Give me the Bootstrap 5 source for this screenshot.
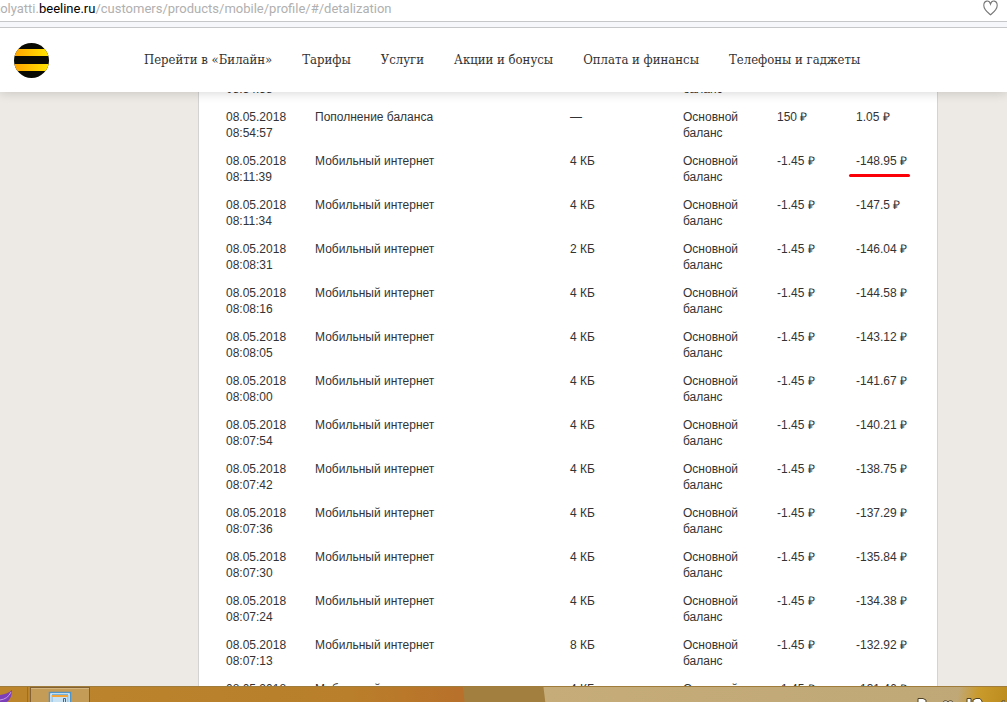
<!DOCTYPE html>
<html lang="ru">
<head>
<meta charset="utf-8">
<meta name="viewport" content="width=device-width, initial-scale=1">
<title>Детализация — Билайн</title>
<link href="https://cdn.jsdelivr.net/npm/bootstrap@5.3.0/dist/css/bootstrap.min.css" rel="stylesheet">
<style>
body{font-family:"Liberation Sans",Arial,sans-serif;font-size:12px;line-height:16px;color:#333;background:#edeae5}
.address{height:22px;border-bottom:1px solid #c6c7c9;font-family:Roboto,"Noto Sans",sans-serif;font-size:13px;line-height:18px;color:#b0b0b0}
.address a{color:inherit;margin-left:-4px}
.address b{font-weight:400;color:#000}
.address button{line-height:0;padding:0 8px 4px}
.toolbar-edge{height:6px;background:#f5f7fa;border-bottom:1px solid #c6c7c9;z-index:3}
.site-head{height:64px;z-index:2;box-shadow:0 1px 10px rgba(0,0,0,.16);padding-left:14px}
.site-menu{margin-left:95px;gap:30px;font-family:"DejaVu Serif Condensed","DejaVu Serif",serif;font-size:13px;line-height:20px}
.site-menu a{color:#333}
.view{min-height:0;padding-left:198px;padding-right:69px}
.sheet{margin-top:-33px;border:solid #d3d3d3;border-width:0 1px;padding:0 0 0 27px}
.ops{table-layout:fixed}
.ops td{padding:6px 0;vertical-align:top;height:44px}
.c-date{width:89px}
.c-wallet{width:94px}
.c-vol{width:113px}
.c-sum{width:79px}
.c-rest{width:81px}
.marked::after{content:"";position:absolute;left:-7px;right:-3px;top:20px;height:3px;border-radius:2px;background:#fb0007}
.taskbar{height:16px;z-index:2;border-top:1px solid #a07c3c;background:linear-gradient(100deg,transparent 95%,#c99a2c 97%,#bd8c1e),linear-gradient(83deg,#bd852b 0,#b8802b 27%,#ba7f2a 35%,#b8702a 46%,#a27e3f 46.1%,#a27e3f 54%,#c5ac78 54.1%,#bfa777)}
.taskbar button{border:0;background:none;padding:0}
.taskbar .pinned{width:28px;border-right:1px solid #96702f}
.taskbar .running{width:60px;margin-left:2px;border:1px solid #826235;border-bottom:0;background:#c59b58;box-shadow:inset 0 1px #d5b57e}
.tray{margin-right:2px}
.taskbar svg{display:block}
</style>
</head>
<body class="vh-100 d-flex flex-column overflow-hidden">
<div class="address d-flex justify-content-between bg-white flex-shrink-0 position-relative z-3">
  <a href="#" class="text-decoration-none text-nowrap">tolyatti.<b>beeline.ru</b>/customers/products/mobile/profile/#/detalization</a>
  <button class="btn border-0" type="button" aria-label="В избранное"><svg width="17" height="17" viewBox="0 0 17 17" fill="none" stroke="#777" stroke-width="1.1"><path d="M8.500 14.800C6.500 13 1.800 9.700 1.800 5.400C1.800 .3 7.200-.5 8.500 4C9.800-.5 15.200 .3 15.200 5.400C15.200 9.700 10.500 13 8.500 14.800Z"/></svg></button>
</div>
<div class="toolbar-edge flex-shrink-0 position-relative"></div>
<header class="site-head bg-white d-flex align-items-center flex-shrink-0 position-relative">
  <a href="#" aria-label="Билайн"><svg class="d-block" width="35" height="35" viewBox="0 0 35 35"><defs><linearGradient id="g"><stop stop-color="#ffa400"/><stop offset="1" stop-color="#ffe500"/></linearGradient><clipPath id="c"><circle cx="17.500" cy="17.500" r="17.500"/></clipPath></defs><g clip-path="url(#c)"><path fill="#080a03" d="M0 0h35v35H0z"/><path fill="url(#g)" d="M0 6h35v7H0zM0 21h35v7H0z"/></g></svg></a>
  <nav class="site-menu d-flex text-nowrap">
    <a href="#" class="text-decoration-none">Перейти в «Билайн»</a>
    <a href="#" class="text-decoration-none">Тарифы</a>
    <a href="#" class="text-decoration-none">Услуги</a>
    <a href="#" class="text-decoration-none">Акции и бонусы</a>
    <a href="#" class="text-decoration-none">Оплата и финансы</a>
    <a href="#" class="text-decoration-none">Телефоны и гаджеты</a>
  </nav>
</header>
<main class="view flex-fill overflow-hidden">
  <div class="sheet bg-white">
    <table class="ops w-100">
      <colgroup><col class="c-date"><col><col class="c-vol"><col class="c-wallet"><col class="c-sum"><col class="c-rest"></colgroup>
      <tbody>
        <tr><td>08.05.2018<br>08:54:58</td><td>Пополнение баланса</td><td>—</td><td>Основной<br>баланс</td><td>150 ₽</td><td>151.05 ₽</td></tr>
        <tr><td>08.05.2018<br>08:54:57</td><td>Пополнение баланса</td><td>—</td><td>Основной<br>баланс</td><td>150 ₽</td><td>1.05 ₽</td></tr>
        <tr><td>08.05.2018<br>08:11:39</td><td>Мобильный интернет</td><td>4 КБ</td><td>Основной<br>баланс</td><td>-1.45 ₽</td><td><span class="marked position-relative">-148.95 ₽</span></td></tr>
        <tr><td>08.05.2018<br>08:11:34</td><td>Мобильный интернет</td><td>4 КБ</td><td>Основной<br>баланс</td><td>-1.45 ₽</td><td>-147.5 ₽</td></tr>
        <tr><td>08.05.2018<br>08:08:31</td><td>Мобильный интернет</td><td>2 КБ</td><td>Основной<br>баланс</td><td>-1.45 ₽</td><td>-146.04 ₽</td></tr>
        <tr><td>08.05.2018<br>08:08:16</td><td>Мобильный интернет</td><td>4 КБ</td><td>Основной<br>баланс</td><td>-1.45 ₽</td><td>-144.58 ₽</td></tr>
        <tr><td>08.05.2018<br>08:08:05</td><td>Мобильный интернет</td><td>4 КБ</td><td>Основной<br>баланс</td><td>-1.45 ₽</td><td>-143.12 ₽</td></tr>
        <tr><td>08.05.2018<br>08:08:00</td><td>Мобильный интернет</td><td>4 КБ</td><td>Основной<br>баланс</td><td>-1.45 ₽</td><td>-141.67 ₽</td></tr>
        <tr><td>08.05.2018<br>08:07:54</td><td>Мобильный интернет</td><td>4 КБ</td><td>Основной<br>баланс</td><td>-1.45 ₽</td><td>-140.21 ₽</td></tr>
        <tr><td>08.05.2018<br>08:07:42</td><td>Мобильный интернет</td><td>4 КБ</td><td>Основной<br>баланс</td><td>-1.45 ₽</td><td>-138.75 ₽</td></tr>
        <tr><td>08.05.2018<br>08:07:36</td><td>Мобильный интернет</td><td>4 КБ</td><td>Основной<br>баланс</td><td>-1.45 ₽</td><td>-137.29 ₽</td></tr>
        <tr><td>08.05.2018<br>08:07:30</td><td>Мобильный интернет</td><td>4 КБ</td><td>Основной<br>баланс</td><td>-1.45 ₽</td><td>-135.84 ₽</td></tr>
        <tr><td>08.05.2018<br>08:07:24</td><td>Мобильный интернет</td><td>4 КБ</td><td>Основной<br>баланс</td><td>-1.45 ₽</td><td>-134.38 ₽</td></tr>
        <tr><td>08.05.2018<br>08:07:13</td><td>Мобильный интернет</td><td>8 КБ</td><td>Основной<br>баланс</td><td>-1.45 ₽</td><td>-132.92 ₽</td></tr>
        <tr><td>08.05.2018<br>08:07:07</td><td>Мобильный интернет</td><td>4 КБ</td><td>Основной<br>баланс</td><td>-1.45 ₽</td><td>-131.46 ₽</td></tr>
      </tbody>
    </table>
  </div>
</main>
<footer class="taskbar d-flex flex-shrink-0 overflow-hidden">
  <button class="pinned" type="button" aria-label="Программа"><svg width="14" height="15" viewBox="0 0 14 15"><path fill="#7d3fb8" d="M12 3Q8 7 0 8v7h7q5-4 5-12z"/><path stroke="#c79be8" fill="none" d="M11 5Q8 12 0 13"/></svg></button>
  <button class="running d-flex justify-content-center" type="button" aria-label="Калькулятор"><svg width="24" height="15" viewBox="0 0 24 15"><path fill="#eaf6fd" stroke="#4f94c8" stroke-width="1.500" d="M1.500 16V4.500h21V16"/><path fill="#c8e2f4" stroke="#79b3da" d="M4 16V6.500h16V16"/><path fill="#f3a53a" d="M4 7h16v2H4z"/><path fill="none" stroke="#44668d" d="M15.500 10.500h2v4h-2z"/></svg></button>
  <div class="tray ms-auto align-self-end"><svg width="90" height="4" viewBox="0 0 90 4" fill="#fff" stroke="#4d4227"><path d="M3 4.500V.5h5l3 1.500v3M27 5q3-4 6-1q3-3 6 1M52 5V.5h4V5M58 5V2l3-1.500h4L67 3v2M87 5V3h3"/></svg></div>
</footer>
<script src="https://cdn.jsdelivr.net/npm/bootstrap@5.3.0/dist/js/bootstrap.bundle.min.js"></script>
</body>
</html>
